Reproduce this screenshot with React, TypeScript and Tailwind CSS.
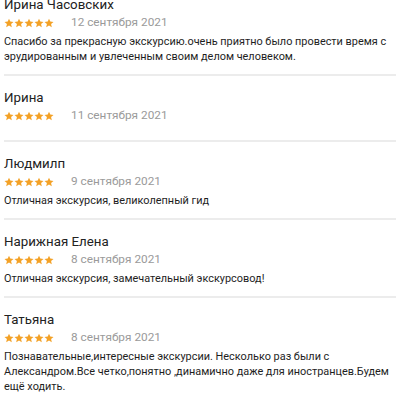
import React from "react";

type Review = { name: string; date: string; text?: string };

const reviews: Review[] = [
  {
    name: "Ирина Часовских",
    date: "12 сентября 2021",
    text: "Спасибо за прекрасную экскурсию.очень приятно было провести время с эрудированным и увлеченным своим делом человеком.",
  },
  { name: "Ирина", date: "11 сентября 2021" },
  { name: "Людмилп", date: "9 сентября 2021", text: "Отличная экскурсия, великолепный гид" },
  { name: "Нарижная Елена", date: "8 сентября 2021", text: "Отличная экскурсия, замечательный экскурсовод!" },
  {
    name: "Татьяна",
    date: "8 сентября 2021",
    text: "Познавательные,интересные экскурсии. Несколько раз были с Александром.Все четко,понятно ,динамично даже для иностранцев.Будем ещё ходить.",
  },
];

function Star() {
  return (
    <svg width="10" height="10" viewBox="0 0 24 24" className="shrink-0">
      <path
        d="M12 1.5l3.1 7.1 7.7.7-5.8 5.1 1.7 7.6L12 18l-6.7 4 1.7-7.6L1.2 9.3l7.7-.7z"
        fill="#f3a126"
      />
    </svg>
  );
}

export default function App() {
  return (
    <div
      className="w-[400px] h-[400px] overflow-hidden bg-white px-[4px]"
      style={{ fontFamily: "Roboto, 'Noto Sans', sans-serif" }}
    >
      <div className="-mt-[4px]">
        {reviews.map((r, i) => (
          <div
            key={i}
            className={`${i === 0 ? "" : "border-t-2 border-[#ececec] pt-[13px]"} ${r.text ? "pb-[10px]" : "pb-[15px]"}`}
          >
            <div className="h-[18px] leading-[18px] text-[13.3px] text-[#222]">{r.name}</div>
            <div className="h-[18px] flex items-center">
              <div className="flex gap-0">
                <Star />
                <Star />
                <Star />
                <Star />
                <Star />
              </div>
              <span className="ml-[17px] text-[11.8px] text-[#9a9a9a]">{r.date}</span>
            </div>
            {r.text && (
              <div className="mt-[2px] text-[10.9px] leading-[15px] text-[#1e1e1e]">{r.text}</div>
            )}
          </div>
        ))}
      </div>
    </div>
  );
}
